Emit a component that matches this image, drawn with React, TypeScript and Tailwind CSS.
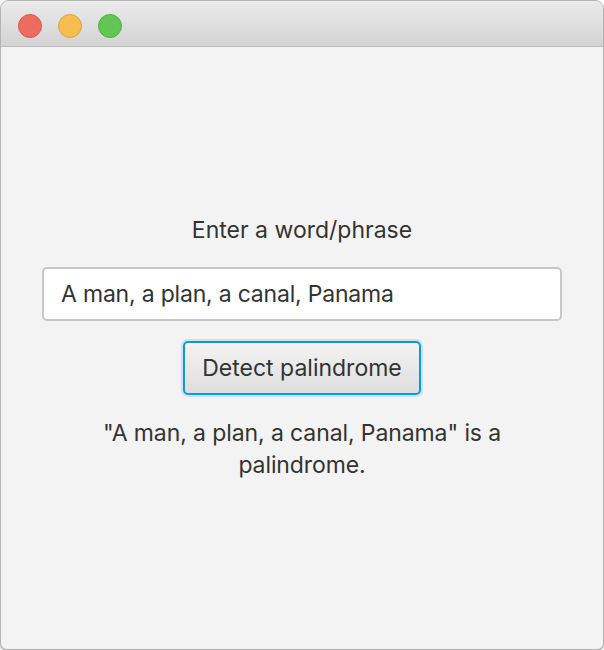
export default function App() {
  return (
    <div className="w-[604px] h-[650px] bg-white font-['Inter','Liberation_Sans',sans-serif]">
      <div className="w-full h-full flex flex-col rounded-t-[9px] rounded-b-[7px] border border-[#b4b4b4] overflow-hidden bg-[#f3f3f3] shadow-[0_1px_2px_rgba(0,0,0,0.35)]">
        {/* Title bar */}
        <div className="h-[46px] shrink-0 flex items-center gap-[16px] pl-[17px] pt-[4px] bg-gradient-to-b from-[#ebebeb] to-[#d3d3d3] border-b border-[#b9b9b9]">
          <span className="w-[24px] h-[24px] rounded-full bg-[#ee6b60] border border-[#d8574d]" />
          <span className="w-[24px] h-[24px] rounded-full bg-[#f6be4f] border border-[#dba43c]" />
          <span className="w-[24px] h-[24px] rounded-full bg-[#62c654] border border-[#4ead41]" />
        </div>

        {/* Content */}
        <div className="flex flex-col items-center pt-[168px] px-[41px] text-[#333333]">
          <p className="text-[23px] leading-[30px]">Enter a word/phrase</p>

          <div className="mt-[22px] w-full h-[54px] flex items-center px-[17px] bg-white border-2 border-[#c7c7c7] rounded-[5px]">
            <span className="text-[23px] tracking-[-0.2px]">A man, a plan, a canal, Panama</span>
          </div>

          <button className="mt-[20px] w-[238px] h-[54px] rounded-[5px] border-2 border-[#0f9ad7] shadow-[0_0_0_2px_rgba(15,154,215,0.18)] bg-gradient-to-b from-[#f3f3f3] to-[#dedede] text-[23px] text-[#333333]">
            Detect palindrome
          </button>

          <p className="mt-[22px] w-[430px] text-center text-[23px] leading-[32px] tracking-[-0.1px]">
            "A man, a plan, a canal, Panama" is a palindrome.
          </p>
        </div>
      </div>
    </div>
  );
}
